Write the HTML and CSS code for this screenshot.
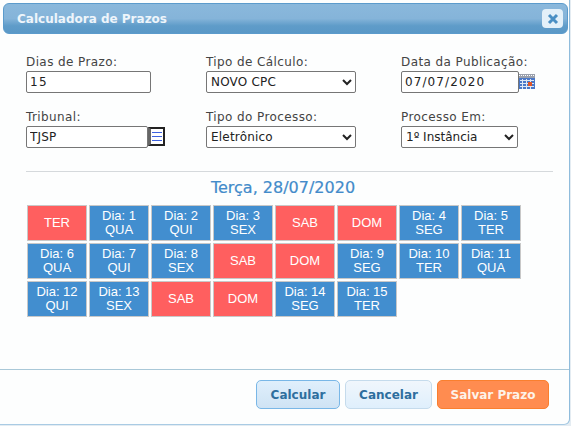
FILE: index.html
```html
<!DOCTYPE html>
<html lang="pt-BR">
<head>
    <meta charset="UTF-8">
    <meta name="viewport" content="width=device-width, initial-scale=1.0">
    <title>Calculadora de Prazos</title>
    <link rel="stylesheet" href="styles.css">
</head>
<body>
    <div class="dialog">
        <div class="titlebar">
            <span class="titulo">Calculadora de Prazos</span>
            <button class="fechar" aria-label="Fechar">
                <svg width="12" height="12" viewBox="0 0 12 12"><path d="M2 2l8 8M10 2l-8 8" stroke="#4a8fc4" stroke-width="3"/></svg>
            </button>
        </div>

        <div class="conteudo">
            <div class="campos">
                <div class="form-group">
                    <label for="dias">Dias de Prazo:</label>
                    <input type="text" id="dias" class="campo-dias" value="15">
                </div>
                <div class="form-group">
                    <label for="tipoCalculo">Tipo de Cálculo:</label>
                    <select id="tipoCalculo" class="campo-select">
                        <option>NOVO CPC</option>
                    </select>
                </div>
                <div class="form-group">
                    <label for="dataPublicacao">Data da Publicação:</label>
                    <div class="linha-campo">
                        <input type="text" id="dataPublicacao" class="campo-data" value="07/07/2020">
                        <svg class="icone-cal" width="16" height="16" viewBox="0 0 16 16">
                            <rect x="0" y="0" width="16" height="4" fill="#9aa0ac"/>
                            <path d="M0 1.500h16" stroke="#fff" stroke-dasharray="1 1"/>
                            <rect x="0" y="4" width="16" height="11" fill="#4a78c8"/>
                            <path d="M1 6.500h14M1 9.500h14M1 12.500h14" stroke="#dfe8f6"/>
                            <path d="M3.500 5v10M7.500 5v10M11.500 5v10" stroke="#dfe8f6"/>
                            <rect x="9" y="8" width="4" height="4" fill="#e0562a"/>
                        </svg>
                    </div>
                </div>
                <div class="form-group">
                    <label for="tribunal">Tribunal:</label>
                    <div class="linha-campo">
                        <input type="text" id="tribunal" class="campo-tribunal" value="TJSP">
                        <span class="icone-lista">
                            <span class="traco"></span>
                            <span class="traco"></span>
                            <span class="traco"></span>
                        </span>
                    </div>
                </div>
                <div class="form-group">
                    <label for="tipoProcesso">Tipo do Processo:</label>
                    <select id="tipoProcesso" class="campo-select">
                        <option>Eletrônico</option>
                    </select>
                </div>
                <div class="form-group">
                    <label for="processoEm">Processo Em:</label>
                    <select id="processoEm" class="campo-instancia">
                        <option>1º Instância</option>
                    </select>
                </div>
            </div>

            <hr class="divisor">
            <h3 class="data-final">Terça, 28/07/2020</h3>

            <div class="dias">
                <div class="dia folga">TER</div>
                <div class="dia">Dia: 1<br>QUA</div>
                <div class="dia">Dia: 2<br>QUI</div>
                <div class="dia">Dia: 3<br>SEX</div>
                <div class="dia folga">SAB</div>
                <div class="dia folga">DOM</div>
                <div class="dia">Dia: 4<br>SEG</div>
                <div class="dia">Dia: 5<br>TER</div>
                <div class="dia">Dia: 6<br>QUA</div>
                <div class="dia">Dia: 7<br>QUI</div>
                <div class="dia">Dia: 8<br>SEX</div>
                <div class="dia folga">SAB</div>
                <div class="dia folga">DOM</div>
                <div class="dia">Dia: 9<br>SEG</div>
                <div class="dia">Dia: 10<br>TER</div>
                <div class="dia">Dia: 11<br>QUA</div>
                <div class="dia">Dia: 12<br>QUI</div>
                <div class="dia">Dia: 13<br>SEX</div>
                <div class="dia folga">SAB</div>
                <div class="dia folga">DOM</div>
                <div class="dia">Dia: 14<br>SEG</div>
                <div class="dia">Dia: 15<br>TER</div>
            </div>
        </div>

        <div class="rodape">
            <button class="btn btn-calcular">Calcular</button>
            <button class="btn btn-cancelar">Cancelar</button>
            <button class="btn btn-salvar">Salvar Prazo</button>
        </div>
    </div>
</body>
</html>
```

FILE: styles.css
```css
html, body {
    height: 100%;
}
body {
    margin: 0;
    overflow: hidden;
    background-color: #e4ecf2;
    font-family: "DejaVu Sans", Verdana, sans-serif;
    color: #333;
}
.dialog {
    box-sizing: border-box;
    width: 570px;
    height: 425px;
    padding: 3px 0 0 3px;
    background: #fdfefe;
    border-right: 1px solid #8fbcdc;
    border-bottom: 1px solid #a9cbe4;
    border-radius: 0 0 6px 0;
    display: flex;
    flex-direction: column;
}
.titlebar {
    box-sizing: border-box;
    height: 31px;
    margin-right: 1px;
    padding: 0 4px 0 13px;
    display: flex;
    align-items: center;
    justify-content: space-between;
    background: linear-gradient(#8ab8dc, #85b4d9 50%, #5f9cc9 75%, #5a98c7);
    border: 1px solid #5b9bcc;
    border-radius: 6px;
}
.titulo {
    color: #eef5fb;
    font-size: 12px;
    font-weight: bold;
}
.fechar {
    width: 21px;
    height: 19px;
    padding: 0;
    border: none;
    border-radius: 4px;
    background: #e3f0f9;
    display: flex;
    align-items: center;
    justify-content: center;
}
.conteudo {
    flex: 1;
    padding: 0 16px 0 23px;
}
.campos {
    display: grid;
    grid-template-columns: 180px 195px 1fr;
    row-gap: 17px;
    padding-top: 21px;
}
.form-group label {
    display: block;
    height: 15px;
    margin-bottom: 1px;
    font-size: 12px;
    line-height: 15px;
    letter-spacing: 0.4px;
    color: #444;
}
input, select {
    display: block;
    box-sizing: border-box;
    height: 22px;
    border: 1px solid #767676;
    border-radius: 2px;
    background: #fff;
    color: #222;
    font-family: "DejaVu Sans", Verdana, sans-serif;
    font-size: 12px;
}
input {
    padding: 0 3px;
}
.linha-campo {
    display: flex;
    align-items: flex-start;
}
.campo-dias {
    width: 125px;
    margin: 1px 0 -1px;
    letter-spacing: 1.3px;
}
.campo-tribunal {
    width: 122px;
    letter-spacing: 0.2px;
}
.campo-select {
    width: 150px;
    letter-spacing: 0.2px;
}
.campo-data {
    width: 118px;
    letter-spacing: 1.1px;
}
.campo-instancia {
    width: 117px;
}
.icone-cal {
    flex: none;
    margin-top: 3px;
}
.icone-lista {
    box-sizing: border-box;
    flex: none;
    width: 17px;
    height: 19px;
    margin-top: 1px;
    padding: 0 1px;
    display: flex;
    flex-direction: column;
    justify-content: center;
    gap: 3px;
    background: #fff;
    border: 2px solid #222;
    border-left: 3px solid #666;
}
.traco {
    height: 1px;
    background: #3e62e0;
}
.divisor {
    height: 1px;
    margin: 23px 0 0;
    border: none;
    background: #d5d9dc;
}
.data-final {
    margin: 7px 13px 8px 0;
    text-align: center;
    font-size: 16px;
    font-weight: normal;
    line-height: 18px;
    color: #428bca;
    -webkit-text-stroke: 0.2px #428bca;
}
.dias {
    width: 496px;
    margin-left: 1px;
    display: flex;
    flex-wrap: wrap;
    gap: 2px;
}
.dia {
    box-sizing: border-box;
    width: 60px;
    height: 36px;
    display: flex;
    align-items: center;
    justify-content: center;
    text-align: center;
    border: 1px solid #c8c8c8;
    background: #428ecf;
    color: #fff;
    font-family: "Liberation Sans", Arial, sans-serif;
    font-size: 13px;
    line-height: 14px;
}
.folga {
    background: #ff5f5f;
}
.rodape {
    box-sizing: border-box;
    height: 55px;
    margin-left: -3px;
    padding: 10px 20px 0 0;
    display: flex;
    justify-content: flex-end;
    align-items: flex-start;
    gap: 5px;
    border-top: 1px solid #a9c8d8;
}
.btn {
    box-sizing: border-box;
    height: 29px;
    border-radius: 5px;
    font-family: "DejaVu Sans", Verdana, sans-serif;
    font-size: 12px;
    font-weight: bold;
    color: #2e6e9e;
}
.btn-calcular {
    width: 84px;
    border: 1px solid #79b7e7;
    background: linear-gradient(#dfeffc, #cfe3f4);
}
.btn-cancelar {
    width: 87px;
    border: 1px solid #c5dbec;
    background: linear-gradient(#f0f6fc, #dfeffc);
}
.btn-salvar {
    width: 112px;
    border: 1px solid #fa7f2e;
    background: #ff8c50;
    color: #fdf3e9;
}
```
